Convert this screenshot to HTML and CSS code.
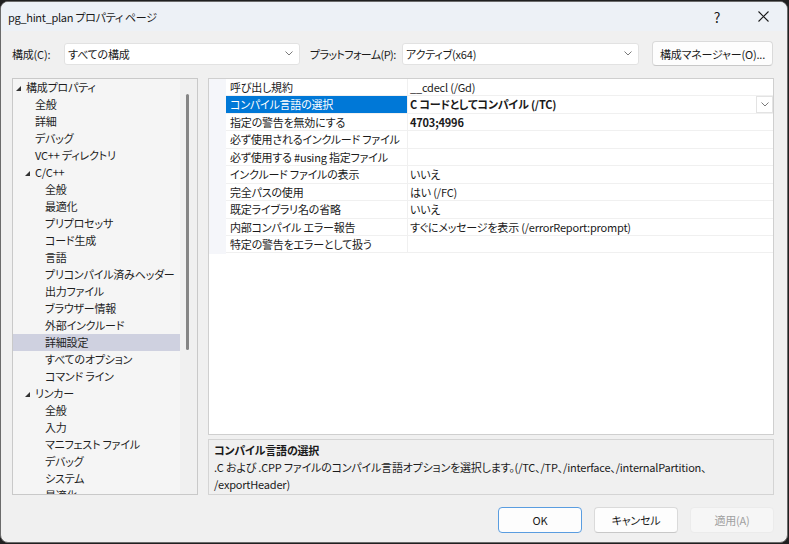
FILE: index.html
```html
<!DOCTYPE html>
<html lang="ja">
<head>
<meta charset="utf-8">
<link rel="stylesheet" href="styles.css">
</head>
<body>
<div class="window">
  <div class="titlebar">
    <span class="title">pg_hint_plan プロパティ ページ</span>
    <span class="cap-btn help">?</span>
    <span class="cap-btn close"><svg width="11" height="11" viewBox="0 0 11 11"><path d="M0.5 0.5L10.5 10.5M10.5 0.5L0.5 10.5" stroke="#1b1b1b" stroke-width="1.1" fill="none"/></svg></span>
  </div>
  <div class="toolbar">
    <span class="lbl">構成(C):</span>
    <div class="combo"><span class="combo-text">すべての構成</span><svg class="chev" width="8" height="5" viewBox="0 0 8 5"><path d="M0.5 0.5L4 4L7.5 0.5" stroke="#7a7a7a" fill="none"/></svg></div>
    <span class="lbl lbl-plat">プラットフォーム(P):</span>
    <div class="combo"><span class="combo-text">アクティブ(x64)</span><svg class="chev" width="8" height="5" viewBox="0 0 8 5"><path d="M0.5 0.5L4 4L7.5 0.5" stroke="#7a7a7a" fill="none"/></svg></div>
    <button class="btn btn-mgr">構成マネージャー(O)...</button>
  </div>
  <div class="main">
    <div class="tree">
      <div class="tree-list">
        <div class="ti l0"><span class="tri"><svg width="5" height="5" viewBox="0 0 5 5"><polygon points="5,0 5,5 0,5" fill="#333"/></svg></span>構成プロパティ</div>
        <div class="ti l1">全般</div>
        <div class="ti l1">詳細</div>
        <div class="ti l1">デバッグ</div>
        <div class="ti l1">VC++ ディレクトリ</div>
        <div class="ti l1p"><span class="tri"><svg width="5" height="5" viewBox="0 0 5 5"><polygon points="5,0 5,5 0,5" fill="#333"/></svg></span>C/C++</div>
        <div class="ti l2">全般</div>
        <div class="ti l2">最適化</div>
        <div class="ti l2">プリプロセッサ</div>
        <div class="ti l2">コード生成</div>
        <div class="ti l2">言語</div>
        <div class="ti l2">プリコンパイル済みヘッダー</div>
        <div class="ti l2">出力ファイル</div>
        <div class="ti l2">ブラウザー情報</div>
        <div class="ti l2">外部インクルード</div>
        <div class="ti l2 sel">詳細設定</div>
        <div class="ti l2">すべてのオプション</div>
        <div class="ti l2">コマンド ライン</div>
        <div class="ti l1p"><span class="tri"><svg width="5" height="5" viewBox="0 0 5 5"><polygon points="5,0 5,5 0,5" fill="#333"/></svg></span>リンカー</div>
        <div class="ti l2">全般</div>
        <div class="ti l2">入力</div>
        <div class="ti l2">マニフェスト ファイル</div>
        <div class="ti l2">デバッグ</div>
        <div class="ti l2">システム</div>
        <div class="ti l2">最適化</div>
      </div>
      <div class="vscroll"><div class="thumb"></div></div>
    </div>
    <div class="right">
      <div class="grid">
        <div class="gutter"></div>
        <div class="rows">
          <div class="row"><div class="name">呼び出し規約</div><div class="val">__cdecl (/Gd)</div></div>
          <div class="row selrow"><div class="name">コンパイル言語の選択</div><div class="val bold">C コードとしてコンパイル (/TC)</div><div class="dd"><svg width="8" height="5" viewBox="0 0 8 5"><path d="M0.5 0.5L4 4L7.5 0.5" stroke="#7a7a7a" fill="none"/></svg></div></div>
          <div class="row"><div class="name">指定の警告を無効にする</div><div class="val bold">4703;4996</div></div>
          <div class="row"><div class="name">必ず使用されるインクルード ファイル</div><div class="val"></div></div>
          <div class="row"><div class="name">必ず使用する #using 指定ファイル</div><div class="val"></div></div>
          <div class="row"><div class="name">インクルード ファイルの表示</div><div class="val">いいえ</div></div>
          <div class="row"><div class="name">完全パスの使用</div><div class="val">はい (/FC)</div></div>
          <div class="row"><div class="name">既定ライブラリ名の省略</div><div class="val">いいえ</div></div>
          <div class="row"><div class="name">内部コンパイル エラー報告</div><div class="val">すぐにメッセージを表示 (/errorReport:prompt)</div></div>
          <div class="row"><div class="name">特定の警告をエラーとして扱う</div><div class="val"></div></div>
        </div>
      </div>
      <div class="desc">
        <div class="desc-title">コンパイル言語の選択</div>
        <div class="desc-text">.C および .CPP ファイルのコンパイル言語オプションを選択します。(/TC、/TP、/interface、/internalPartition、<br>/exportHeader)</div>
      </div>
    </div>
  </div>
  <div class="footer">
    <button class="btn fbtn ok">OK</button>
    <button class="btn fbtn">キャンセル</button>
    <button class="btn fbtn disabled">適用(A)</button>
  </div>
</div>
</body>
</html>
```

FILE: styles.css
```css
html, body {
  margin: 0;
  padding: 0;
}
body {
  width: 789px;
  height: 544px;
  overflow: hidden;
  background: #202020;
  font-family: "Noto Sans CJK JP", "Noto Sans", sans-serif;
  font-size: 11px;
  letter-spacing: -0.2px;
  font-feature-settings: "palt";
  color: #1a1a1a;
}
.window {
  margin-top: 1px;
  width: 788px;
  height: 542px;
  box-sizing: border-box;
  border: 1px solid #6b6b6b;
  border-radius: 8px;
  background: #f0f0f0;
  overflow: hidden;
  display: flex;
  flex-direction: column;
}
.titlebar {
  height: 29px;
  background: #edf1f6;
  display: flex;
  align-items: center;
  padding-left: 7px;
  flex-shrink: 0;
}
.title {
  flex: 1;
  font-size: 11px;
  letter-spacing: -0.3px;
  color: #1a1a1a;
}
.cap-btn {
  width: 46px;
  height: 29px;
  display: flex;
  align-items: center;
  justify-content: center;
  font-size: 14px;
  color: #1b1b1b;
}
.close {
  margin-right: 1px;
}
.toolbar {
  display: grid;
  grid-template-columns: 52px 236px 102px 237px 134px;
  align-items: center;
  height: 25px;
  margin-top: 10px;
  padding-left: 11px;
  flex-shrink: 0;
}
.lbl {
  white-space: nowrap;
}
.lbl-plat {
  padding-left: 10px;
  letter-spacing: -0.6px;
}
.combo {
  height: 22px;
  box-sizing: border-box;
  background: #fff;
  border: 1px solid #e2e2e2;
  border-radius: 3px;
  display: flex;
  align-items: center;
  padding: 0 6px 0 3px;
}
.combo-text {
  flex: 1;
}
.btn {
  font-family: inherit;
  font-size: 11px;
  letter-spacing: -0.2px;
  font-feature-settings: "palt";
  color: #1a1a1a;
  background: #fdfdfd;
  border: 1px solid #dadada;
  border-bottom-color: #c8c8c8;
  border-radius: 4px;
  padding: 0;
  margin: 0;
}
.btn-mgr {
  margin-left: 13px;
  width: 121px;
  height: 25px;
}
.main {
  display: flex;
  margin-top: 12px;
  padding-left: 11px;
  gap: 10px;
  height: 417px;
  flex-shrink: 0;
}
.tree {
  width: 186px;
  height: 417px;
  box-sizing: border-box;
  border: 1px solid #c9c9c9;
  background: #f5f5f5;
  display: flex;
  overflow: hidden;
}
.tree-list {
  width: 167px;
  overflow: hidden;
}
.ti {
  height: 17px;
  line-height: 17px;
  white-space: nowrap;
  display: flex;
  align-items: center;
  color: #1e1e1e;
}
.tri {
  width: 10px;
  height: 17px;
  display: flex;
  align-items: center;
  padding-top: 1px;
  box-sizing: border-box;
}
.l0 { padding-left: 3px; }
.l1 { padding-left: 22px; }
.l1p { padding-left: 12px; }
.l2 { padding-left: 32px; }
.sel {
  background: #cfd1e0;
}
.vscroll {
  width: 17px;
  background: #f0f0f0;
  position: relative;
}
.thumb {
  position: absolute;
  left: 6px;
  top: 15px;
  width: 3px;
  height: 256px;
  border-radius: 2px;
  background: #858585;
}
.right {
  width: 566px;
  display: flex;
  flex-direction: column;
  gap: 4px;
}
.grid {
  height: 357px;
  box-sizing: border-box;
  border: 1px solid #cfcfcf;
  background: #fff;
  display: flex;
  align-items: flex-start;
}
.gutter {
  width: 17px;
  height: 175px;
  background: #f5f6fa;
}
.rows {
  flex: 1;
}
.row {
  height: 17.45px;
  display: flex;
  box-sizing: border-box;
  border-bottom: 1px solid #f0f0f0;
  position: relative;
}
.name {
  width: 182px;
  padding-left: 4px;
  box-sizing: border-box;
  border-right: 1px solid #f0f0f0;
  white-space: nowrap;
  line-height: 16px;
  overflow: hidden;
}
.val {
  flex: 1;
  padding-left: 2px;
  white-space: nowrap;
  line-height: 16px;
}
.bold {
  font-weight: bold;
}
.selrow .name {
  background: #0078d7;
  color: #fff;
}
.dd {
  position: absolute;
  right: 0;
  top: 0;
  width: 17px;
  height: 17px;
  box-sizing: border-box;
  border: 1px solid #e3e3e3;
  background: #fff;
  display: flex;
  align-items: center;
  justify-content: center;
}
.desc {
  height: 56px;
  box-sizing: border-box;
  border: 1px solid #d4d4d4;
  background: #f0f0f0;
  padding: 2px 5px 0 5px;
  line-height: 17px;
}
.desc-title {
  font-weight: bold;
}
.footer {
  display: flex;
  justify-content: flex-end;
  gap: 12px;
  margin-top: 12px;
  padding-right: 13px;
}
.fbtn {
  width: 84px;
  height: 26px;
}
.ok {
  border: 1px solid #5a9de0;
}
.disabled {
  background: #f6f6f6;
  border-color: #ebebeb;
  color: #a0a0a0;
}
```
